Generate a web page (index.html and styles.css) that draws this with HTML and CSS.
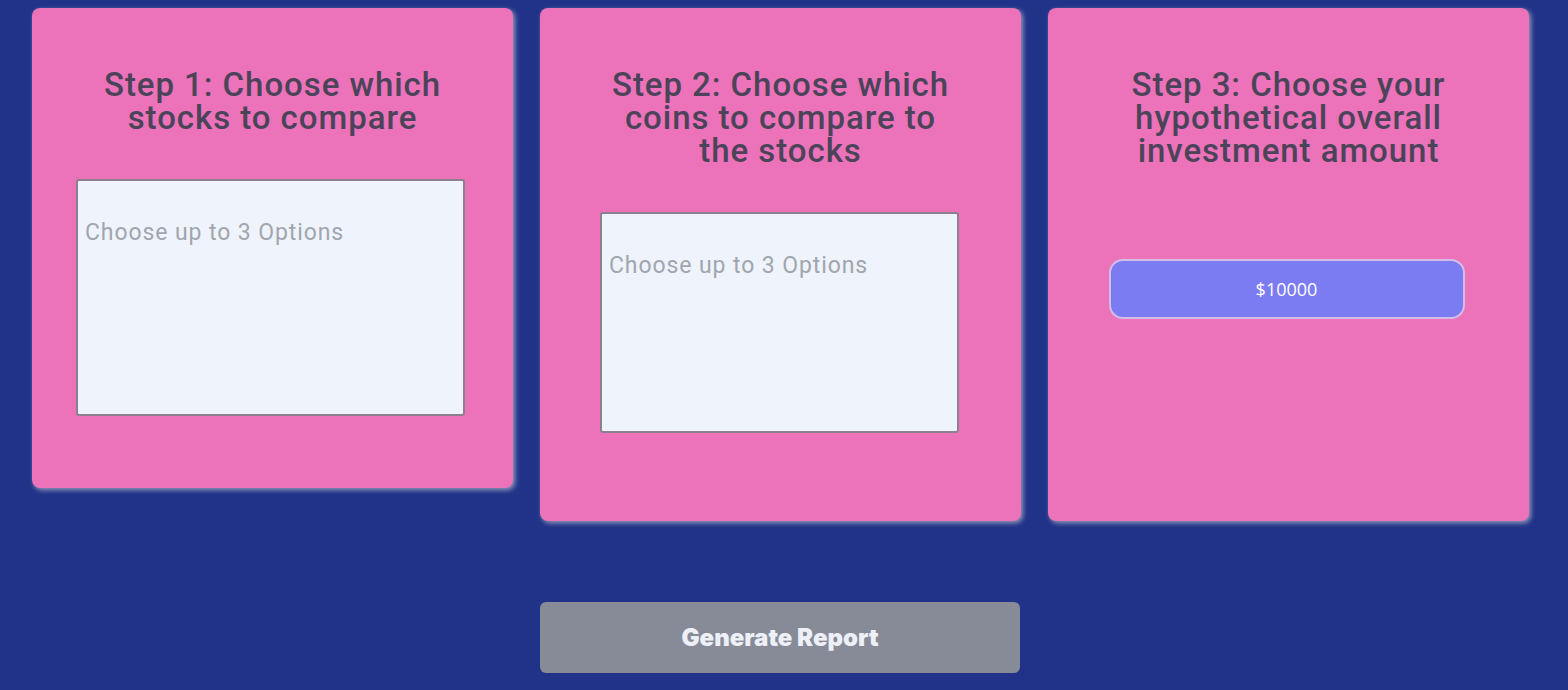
FILE: index.html
```html
<!DOCTYPE html>
<html>
<head>
<meta charset="utf-8">
<link rel="stylesheet" href="styles.css">
</head>
<body>
<main class="page">
  <section class="steps">
    <div class="card card-1">
      <h2 class="card-title">Step 1: Choose which stocks to compare</h2>
      <div class="picker picker-1"><span class="placeholder">Choose up to 3 Options</span></div>
    </div>
    <div class="card card-2">
      <h2 class="card-title">Step 2: Choose which coins to compare to the stocks</h2>
      <div class="picker picker-2"><span class="placeholder">Choose up to 3 Options</span></div>
    </div>
    <div class="card card-3">
      <h2 class="card-title">Step 3: Choose your hypothetical overall investment amount</h2>
      <div class="amount">$10000</div>
    </div>
  </section>
  <div class="actions">
    <button class="generate">Generate Report</button>
  </div>
</main>
</body>
</html>
```

FILE: styles.css
```css
html, body {
  margin: 0;
  padding: 0;
  background: #213388;
  height: 100%;
}
.page {
  padding: 8px 0 0 32px;
  width: 1497px;
}
.steps {
  display: flex;
  align-items: flex-start;
  gap: 27px;
}
.card {
  box-sizing: border-box;
  flex: none;
  width: 481px;
  background: #ec72b9;
  border-radius: 8px;
  box-shadow: 2px 2px 5px rgba(190, 190, 205, 0.75);
  padding-top: 60px;
  display: flex;
  flex-direction: column;
  align-items: center;
}
.card-1 { height: 480px; }
.card-2, .card-3 { height: 513px; }
.card-title {
  margin: 0;
  width: 348px;
  text-align: center;
  font-family: Roboto, "Noto Sans", sans-serif;
  font-weight: 500;
  font-size: 33px;
  line-height: 33px;
  letter-spacing: 0.95px;
  color: #4b4459;
}
.picker {
  box-sizing: border-box;
  margin-top: 45px;
  background: #eff4fc;
  border: 2px solid #8c7f90;
  border-radius: 3px;
  padding: 38px 0 0 7px;
}
.picker-1 { width: 389px; height: 237px; margin-right: 4px; }
.picker-2 { width: 359px; height: 221px; margin-right: 2px; }
.placeholder {
  font-family: Roboto, "Noto Sans", sans-serif;
  font-size: 23px;
  letter-spacing: 0.9px;
  color: #a1a5ae;
}
.amount {
  box-sizing: border-box;
  margin-top: 92px;
  margin-right: 4px;
  width: 356px;
  height: 60px;
  background: #7b7cf1;
  border: 2px solid #d4bde6;
  border-radius: 14px;
  display: flex;
  align-items: center;
  justify-content: center;
  font-family: "Open Sans", "Noto Sans", sans-serif;
  font-size: 18px;
  color: #ffffff;
}
.actions {
  box-sizing: border-box;
  display: flex;
  justify-content: center;
  margin-top: 81px;
  width: 1497px;
  padding-right: 1px;
}
.generate {
  width: 480px;
  height: 71px;
  border: none;
  border-radius: 6px;
  background: #878b98;
  color: #eef0f8;
  font-family: Inter, Roboto, sans-serif;
  font-weight: 900;
  font-size: 24px;
}
```
